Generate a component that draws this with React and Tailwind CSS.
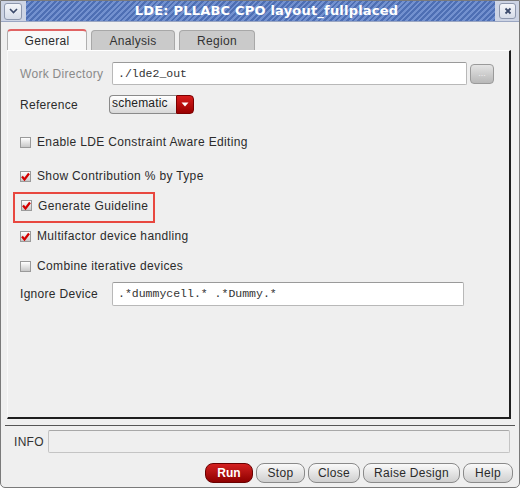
import React from 'react';

const ui = { fontFamily: '"Liberation Sans", Arial, sans-serif' };
const mono = { fontFamily: '"Liberation Mono", "Courier New", monospace' };

const Check = ({ checked }) => (
  <span className="w-[11px] h-[11px] border border-[#9a9a9a] bg-gradient-to-b from-white to-[#c8c8c8] flex items-center justify-center shrink-0">
    {checked && (
      <svg width="9" height="9" viewBox="0 0 9 9">
        <path d="M1 4.5 L3.5 7.5 L8 1.5" fill="none" stroke="#d40000" strokeWidth="2.2" strokeLinejoin="miter" />
      </svg>
    )}
  </span>
);

const CheckRow = ({ label, checked }) => (
  <div className="h-[20px] flex items-center gap-[6px] pl-[12px]">
    <Check checked={checked} />
    <span className="text-[12px] tracking-[0.35px] text-[#2b2b2b]">{label}</span>
  </div>
);

const Btn = ({ children, w, primary }) => (
  <button
    className={
      primary
        ? 'h-[20px] rounded-[8px] border border-[#6a0000] bg-gradient-to-b from-[#d42020] to-[#8e0000] text-white font-bold text-[12px]'
        : 'h-[20px] rounded-[8px] border border-[#8a8a8a] bg-gradient-to-b from-[#fafafa] to-[#cfcfcf] text-[#2b2b2b] text-[12px] tracking-[0.3px]'
    }
    style={{ width: w }}
  >
    {children}
  </button>
);

export default function App() {
  return (
    <div style={ui} className="w-[520px] h-[488px] bg-[#efefef] flex flex-col border border-[#7a7a7a] rounded-b-[5px] overflow-hidden">
      {/* title bar */}
      <div className="h-[21px] bg-[#cdd4e4] flex items-center border-b border-[#9aa6c2]">
        <div className="ml-[3px] w-[18px] h-[17px] rounded-[3px] border border-[#8d97ad] bg-gradient-to-b from-[#f4f6fa] to-[#d6dce8] flex items-center justify-center">
          <svg width="9" height="6" viewBox="0 0 9 6">
            <path d="M1 1 L4.5 4.5 L8 1" fill="none" stroke="#3b4a6b" strokeWidth="1.6" />
          </svg>
        </div>
        <div className="ml-[4px] flex-1 h-full flex items-center justify-center bg-[repeating-linear-gradient(135deg,#4e6fb4_0px,#4e6fb4_2px,#7391cf_2px,#7391cf_4px)]">
          <span className="ml-[12px] text-white font-bold text-[13px] tracking-[0.2px]" style={{ fontFamily: '"DejaVu Sans", sans-serif' }}>
            LDE: PLLABC CPO layout_fullplaced
          </span>
        </div>
        <div className="ml-[4px] mr-[3px] w-[17px] h-[16px] rounded-[3px] border border-[#8d97ad] bg-gradient-to-b from-[#f4f6fa] to-[#d6dce8] flex items-center justify-center">
          <svg width="8" height="8" viewBox="0 0 8 8">
            <path d="M1.5 1.5 L6.5 6.5 M6.5 1.5 L1.5 6.5" stroke="#3b4a6b" strokeWidth="1.8" />
          </svg>
        </div>
      </div>

      {/* tabs */}
      <div className="mt-[7px] ml-[6px] flex items-end gap-[4px] h-[21px]">
        <div className="w-[80px] h-[21px] rounded-t-[4px] border-t-2 border-t-[#e06464] border-x border-x-[#b0b0b0] bg-[#f8f8f8] flex items-center justify-center text-[12px] tracking-[0.3px] text-[#2b2b2b]">
          General
        </div>
        <div className="w-[84px] h-[20px] rounded-t-[4px] border border-b-0 border-[#a8a8a8] bg-[#cacaca] flex items-center justify-center text-[12px] tracking-[0.3px] text-[#333]">
          Analysis
        </div>
        <div className="w-[76px] h-[20px] rounded-t-[4px] border border-b-0 border-[#a8a8a8] bg-[#cacaca] flex items-center justify-center text-[12px] tracking-[0.3px] text-[#333]">
          Region
        </div>
      </div>

      {/* panel */}
      <div className="ml-[6px] w-[504px] h-[369px] border-t border-l border-t-white border-l-[#f8f8f8] border-r-2 border-b-2 border-r-[#1e1e1e] border-b-[#1e1e1e] pt-[11px] flex flex-col">
        <div className="h-[23px] flex items-center pl-[12px]">
          <span className="w-[92px] text-[12px] tracking-[0.3px] text-[#8a8a8a]">Work Directory</span>
          <div className="w-[355px] h-[23px] bg-white border border-[#b8b8b8] border-t-[#9a9a9a] rounded-[2px] flex items-center pl-[5px] text-[11.5px] text-[#333]" style={mono}>
            ./lde2_out
          </div>
          <div className="ml-[3px] w-[24px] h-[20px] rounded-[4px] border border-[#9a9a9a] bg-gradient-to-b from-[#e4e4e4] to-[#b8b8b8] flex items-center justify-center text-[9px] text-[#f0f0f0] leading-none">
            ...
          </div>
        </div>

        <div className="mt-[10px] h-[19px] flex items-center pl-[12px]">
          <span className="w-[89px] text-[12px] tracking-[0.3px] text-[#2b2b2b]">Reference</span>
          <div className="flex h-[19px] w-[85px]">
            <div className="flex-1 rounded-l-[4px] border border-[#8a8a8a] border-r-0 bg-gradient-to-b from-white to-[#d8d8d8] text-[12px] tracking-[0.2px] text-[#222] pl-[2px] leading-[14px]">
              schematic
            </div>
            <div className="w-[18px] rounded-r-[4px] bg-gradient-to-b from-[#d81c1c] to-[#990000] border border-[#7a0000] flex items-center justify-center">
              <svg width="8" height="5" viewBox="0 0 8 5">
                <path d="M0.5 0.5 L7.5 0.5 L4 4.5 Z" fill="white" />
              </svg>
            </div>
          </div>
        </div>

        <div className="mt-[18px]">
          <CheckRow label="Enable LDE Constraint Aware Editing" />
        </div>
        <div className="mt-[14px]">
          <CheckRow label="Show Contribution % by Type" checked />
        </div>
        <div className="mt-[6px] ml-[5px] w-[142px] h-[31px] border-2 border-[#e8473f] flex items-center pb-[4px]">
          <div className="h-[20px] flex items-center gap-[6px] pl-[6px]">
            <Check checked />
            <span className="text-[12px] tracking-[0.35px] text-[#2b2b2b]">Generate Guideline</span>
          </div>
        </div>
        <div className="mt-[3px]">
          <CheckRow label="Multifactor device handling" checked />
        </div>
        <div className="mt-[10px]">
          <CheckRow label="Combine iterative devices" />
        </div>

        <div className="mt-[6px] h-[24px] flex items-center pl-[12px]">
          <span className="w-[92px] text-[12px] tracking-[0.3px] text-[#2b2b2b]">Ignore Device</span>
          <div className="w-[352px] h-[24px] bg-white border border-[#b8b8b8] border-t-[#9a9a9a] rounded-[2px] flex items-center pl-[5px] text-[11.5px] text-[#333] whitespace-pre" style={mono}>
            {'.*dummycell.* .*Dummy.*'}
          </div>
        </div>
      </div>

      {/* separator */}
      <div className="mt-[6px] mx-[4px] border-t border-[#555]" />

      {/* info */}
      <div className="mt-[4px] h-[23px] flex items-center pl-[13px] pr-[9px]">
        <span className="w-[34px] text-[12px] tracking-[0.3px] text-[#333]">INFO</span>
        <div className="flex-1 h-[23px] border border-[#c4c4c4] border-t-[#a8a8a8] rounded-[2px] bg-[#efefef]" />
      </div>

      {/* buttons */}
      <div className="mt-[10px] flex justify-end gap-[3px] pr-[6px]">
        <Btn w={48} primary>Run</Btn>
        <Btn w={49}>Stop</Btn>
        <Btn w={52}>Close</Btn>
        <Btn w={97}>Raise Design</Btn>
        <Btn w={50}>Help</Btn>
      </div>
    </div>
  );
}
